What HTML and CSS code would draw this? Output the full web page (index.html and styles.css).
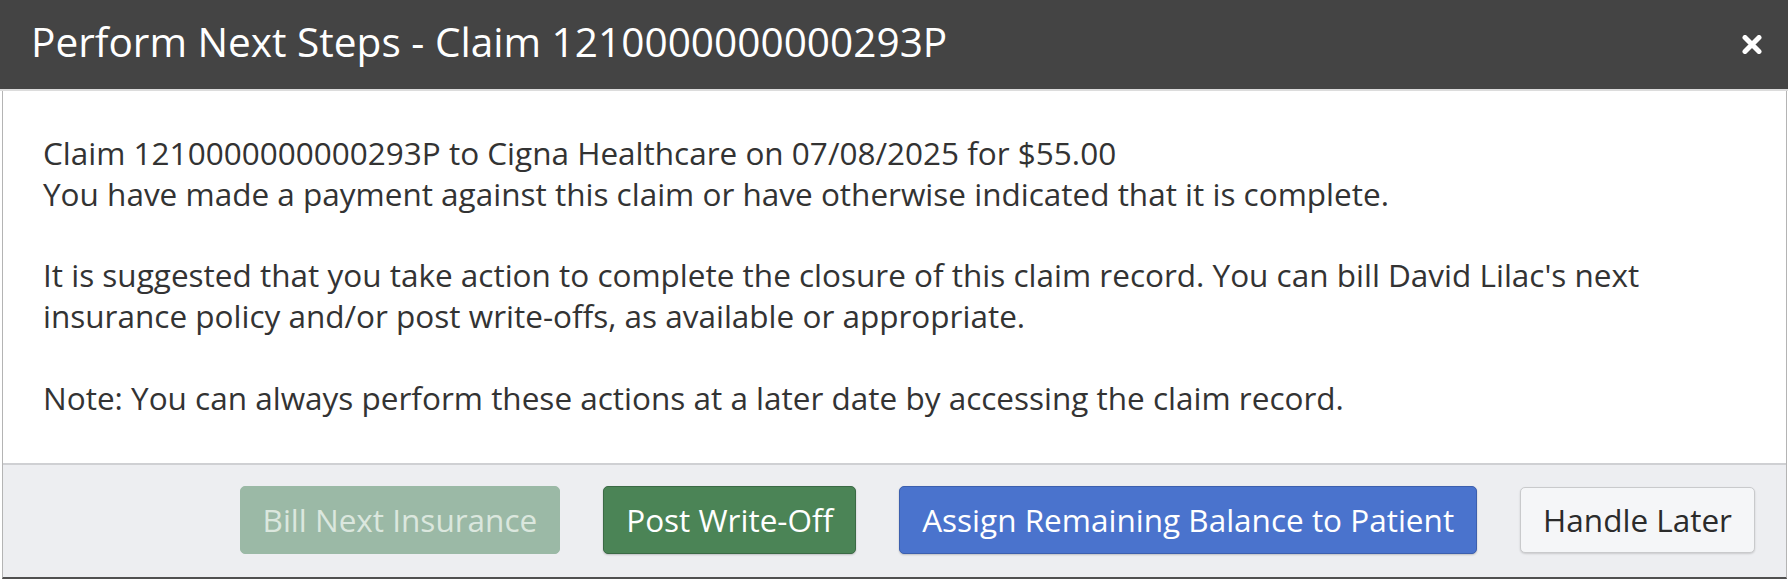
FILE: index.html
```html
<!DOCTYPE html>
<html>
<head>
<meta charset="utf-8">
<link rel="stylesheet" href="styles.css">
</head>
<body>
<div class="modal">
  <div class="modal-header">
    <h4 class="modal-title">Perform Next Steps - Claim 1210000000000293P</h4>
    <button class="close" aria-label="Close">
      <svg width="20" height="19" viewBox="0 0 20 19"><path d="M3 2.5 L17 16.5 M17 2.5 L3 16.5" stroke="#fff" stroke-width="5" stroke-linecap="round"/></svg>
    </button>
  </div>
  <div class="modal-content">
    <div class="modal-body">
      Claim 1210000000000293P to Cigna Healthcare on 07/08/2025 for $55.00<br>
      You have made a payment against this claim or have otherwise indicated that it is complete.<br><br>
      It is suggested that you take action to complete the closure of this claim record. You can bill David Lilac's next insurance policy and/or post write-offs, as available or appropriate.<br><br>
      Note: You can always perform these actions at a later date by accessing the claim record.
    </div>
    <div class="modal-footer">
      <button class="btn btn-disabled">Bill Next Insurance</button>
      <button class="btn btn-success">Post Write-Off</button>
      <button class="btn btn-primary">Assign Remaining Balance to Patient</button>
      <button class="btn btn-default">Handle Later</button>
    </div>
  </div>
</div>
</body>
</html>
```

FILE: styles.css
```css
* { box-sizing: border-box; }
html, body {
  margin: 0;
  padding: 0;
  background: #ffffff;
}
body {
  font-family: "Open Sans", "Noto Sans", sans-serif;
  color: #333333;
  width: 1788px;
  height: 579px;
  overflow: hidden;
}
.modal {
  width: 1788px;
  height: 579px;
  display: flex;
  flex-direction: column;
}
.modal-header {
  height: 91px;
  flex: 0 0 auto;
  background: #444444;
  border-bottom: 2px solid #dcdcdc;
  display: flex;
  align-items: center;
  justify-content: space-between;
  padding: 0 26px 5px 31px;
}
.modal-title {
  margin: 0;
  font-size: 40.6px;
  font-weight: 400;
  color: #ffffff;
  line-height: 1.362;
}
.close {
  border: 0;
  background: transparent;
  padding: 0;
  width: 20px;
  height: 19px;
  display: flex;
  margin-top: 4px;
}
.modal-content {
  flex: 1 1 auto;
  margin: 0 1px 0 2px;
  border-left: 1px solid #b4b4b4;
  border-right: 1px solid #b4b4b4;
  border-bottom: 2px solid #505050;
  display: flex;
  flex-direction: column;
}
.modal-body {
  flex: 1 1 auto;
  padding: 42px 40px 0 40px;
  font-size: 31.5px;
  line-height: 40.8px;
  color: #333333;
}
.modal-footer {
  flex: 0 0 auto;
  height: 114px;
  background: #edeef1;
  border-top: 2px solid #cfd0d3;
  display: flex;
  justify-content: flex-end;
  align-items: center;
  gap: 43px;
  padding: 0 31px 2px 0;
}
.btn {
  font-family: "Open Sans", "Noto Sans", sans-serif;
  font-size: 31.5px;
  line-height: 40px;
  height: 68px;
  padding: 0 22px;
  border-radius: 5px;
  border: 1px solid transparent;
  white-space: nowrap;
}
.btn-disabled {
  background: #9bb9a6;
  border-color: #9bb9a6;
  color: #dbe7de;
}
.btn-success {
  background: #4b8456;
  border-color: #3b6a45;
  color: #ffffff;
  box-shadow: 0 1px 2px rgba(0,0,0,0.2);
}
.btn-primary {
  background: #4a73cd;
  border-color: #3c5fae;
  color: #ffffff;
  box-shadow: 0 1px 2px rgba(0,0,0,0.2);
}
.btn-default {
  background: #f5f6f8;
  border-color: #c9cacc;
  color: #2b2b2b;
  height: 66px;
  box-shadow: 0 1px 2px rgba(0,0,0,0.15);
}
```
